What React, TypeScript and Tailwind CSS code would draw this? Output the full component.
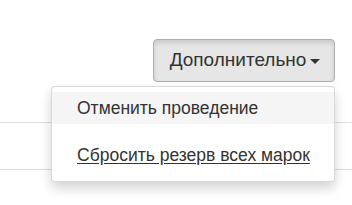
export default function App() {
  return (
    <div className="relative h-[205px] w-[352px] overflow-hidden bg-white font-['Liberation_Sans',Arial,sans-serif] text-[#333]">
      <div className="flex justify-end pr-[17px] pt-[39px]">
        <button className="flex h-[43px] w-[182px] items-center justify-center gap-[4px] rounded-[4px] border border-[#adadad] bg-[#e6e6e6] pl-[2px] text-[19px] text-[#333] shadow-[inset_0_3px_5px_rgba(0,0,0,0.125)]">
          <span>Дополнительно</span>
          <span className="mt-[2px] h-0 w-0 border-x-[5px] border-t-[5px] border-x-transparent border-t-[#333]" />
        </button>
      </div>

      <div className="mt-[40px] border-t border-[#ddd]" />
      <div className="mt-[46px] border-t border-[#ddd]" />

      <div className="absolute left-[51px] top-[86px] h-[96px] w-[284px] rounded-[4px] border border-[rgba(0,0,0,0.15)] bg-white py-[5px] shadow-[0_6px_12px_rgba(0,0,0,0.175)]">
        <div className="flex h-[32px] items-center bg-[#f5f5f5] pl-[25px] pt-[2px] text-[17.5px] leading-none">
          Отменить проведение
        </div>
        <div className="flex h-[40px] items-end pl-[25px] text-[17.5px] leading-none">
          <a href="#" className="text-[#333] underline underline-offset-[2px]">
            Сбросить резерв всех марок
          </a>
        </div>
      </div>
    </div>
  );
}
